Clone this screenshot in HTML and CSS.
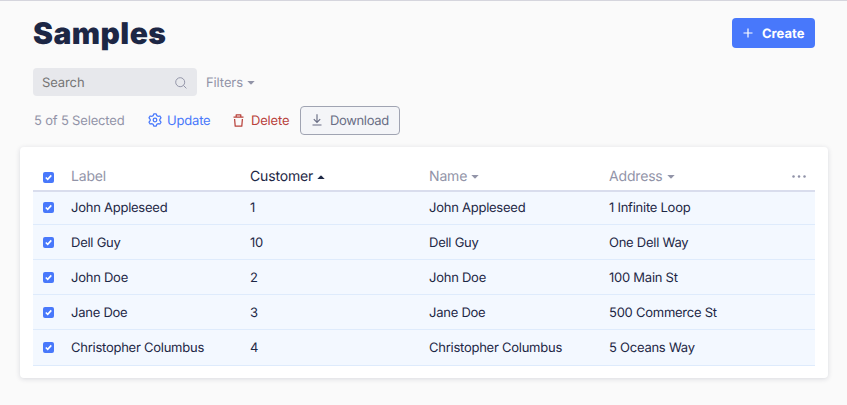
FILE: index.html
```html
<!DOCTYPE html>
<html lang="en">
<head>
<meta charset="utf-8">
<title>Samples</title>
<link rel="stylesheet" href="styles.css">
</head>
<body>
<svg class="defs" width="0" height="0">
  <symbol id="check" viewBox="0 0 11 11"><rect width="11" height="11" rx="2" fill="#4878fb"/><path d="M2.8 5.5l1.9 1.9 3.6-4" fill="none" stroke="#fff" stroke-width="1.6"/></symbol>
  <symbol id="caret" viewBox="0 0 8 4"><path d="M.3 0h7.4L4.5 3.3q-.5.5-1 0z" fill="currentColor"/></symbol>
</svg>
<main class="page">
  <header class="header">
    <h1 class="title">Samples</h1>
    <button class="create"><svg width="10" height="10" viewBox="0 0 10 10"><path d="M5 .5v9M.5 5h9" stroke="#fff" stroke-width="1.2"/></svg><span>Create</span></button>
  </header>
  <div class="filters">
    <div class="search"><span>Search</span><svg width="12" height="12" viewBox="0 0 12 12" fill="none" stroke="#9496a9"><circle cx="5.2" cy="5.2" r="4.5"/><path d="M8.4 8.4l3 3"/></svg></div>
    <span class="filter-label">Filters</span><svg class="caret" width="8" height="4"><use href="#caret"/></svg>
  </div>
  <div class="actions">
    <span class="count">5 of 5 Selected</span>
    <span class="action update"><svg width="14" height="14" viewBox="0 0 14 14" fill="none" stroke="currentColor" stroke-width="1.25" stroke-linejoin="round"><path d="M5.2 2.6L5.9.8h2.2l.7 1.8 1.2.7 1.9-.3 1.1 1.9-1.2 1.4v1.4L13 9.1 11.9 11l-1.9-.3-1.2.7-.7 1.8H5.9l-.7-1.8-1.2-.7-1.9.3L1 9.1l1.2-1.4V6.3L1 4.9 2.1 3l1.9.3z"/><circle cx="7" cy="7" r="1.8"/></svg><span>Update</span></span>
    <span class="action delete"><svg width="11" height="13" viewBox="0 0 11 13" fill="none" stroke="currentColor" stroke-width="1.25" stroke-linejoin="round"><path d="M.5 3.1h10M3.2 3V.8h4.6V3M1.6 5l.6 7.2h6.6L9.4 5"/></svg><span>Delete</span></span>
    <button class="download"><svg width="10" height="12" viewBox="0 0 10 12" fill="none" stroke="currentColor" stroke-width="1.15"><path d="M5 .3v8M1.8 5.2L5 8.4l3.2-3.2M.5 11h9"/></svg><span>Download</span></button>
  </div>
  <section class="card">
    <div class="row head">
      <svg class="check" width="11" height="11"><use href="#check"/></svg>
      <span>Label</span>
      <span class="sorted">Customer<svg class="caret up" width="8" height="4"><use href="#caret"/></svg></span>
      <span>Name<svg class="caret" width="8" height="4"><use href="#caret"/></svg></span>
      <span>Address<svg class="caret" width="8" height="4"><use href="#caret"/></svg></span>
      <svg class="more" width="14" height="3" viewBox="0 0 14 3" fill="#8f91a7"><circle cx="1.5" cy="1.5" r="1.25"/><circle cx="7" cy="1.5" r="1.25"/><circle cx="12.5" cy="1.5" r="1.25"/></svg>
    </div>
    <div class="row"><svg class="check" width="11" height="11"><use href="#check"/></svg><span>John Appleseed</span><span>1</span><span>John Appleseed</span><span>1 Infinite Loop</span></div>
    <div class="row"><svg class="check" width="11" height="11"><use href="#check"/></svg><span>Dell Guy</span><span>10</span><span>Dell Guy</span><span>One Dell Way</span></div>
    <div class="row"><svg class="check" width="11" height="11"><use href="#check"/></svg><span>John Doe</span><span>2</span><span>John Doe</span><span>100 Main St</span></div>
    <div class="row"><svg class="check" width="11" height="11"><use href="#check"/></svg><span>Jane Doe</span><span>3</span><span>Jane Doe</span><span>500 Commerce St</span></div>
    <div class="row"><svg class="check" width="11" height="11"><use href="#check"/></svg><span>Christopher Columbus</span><span>4</span><span>Christopher Columbus</span><span>5 Oceans Way</span></div>
  </section>
</main>
</body>
</html>
```
FILE: styles.css
```css
* { box-sizing: border-box; }
body {
  margin: 0;
  background: #fafafa;
  color: #1d2745;
  font-family: Inter, sans-serif;
  font-size: 13px;
  letter-spacing: -.25px;
  text-rendering: geometricPrecision;
}
svg { display: block; flex: none; }
.defs { height: 0; }
button { font: inherit; letter-spacing: inherit; text-rendering: inherit; }
.page {
  height: 405px;
  padding: 0 19px 0 20px;
  border-top: 1px solid #d5d5dd;
  overflow: hidden;
}
.header {
  display: flex;
  justify-content: space-between;
  padding: 13px 13px 0;
}
.title {
  margin: 0;
  font-size: 30px;
  line-height: 40px;
  font-weight: 900;
  letter-spacing: .45px;
}
.create {
  display: flex;
  align-items: center;
  gap: 9px;
  width: 83px;
  height: 30px;
  margin: 4px 0 0;
  padding: 0 0 0 11px;
  border: 0;
  border-radius: 4px;
  background: #4878fb;
  color: #fff;
  font-weight: 700;
  letter-spacing: 0;
}
.create span { padding-top: 2px; }
.filters {
  display: flex;
  align-items: center;
  height: 28px;
  margin: 14px 0 0 13px;
  color: #9294a8;
}
.search {
  display: flex;
  align-items: center;
  justify-content: space-between;
  width: 164px;
  height: 28px;
  margin-right: 9px;
  padding: 1px 10px 0 9px;
  border-radius: 4px;
  background: #e7e8ec;
  color: #757575;
  letter-spacing: -.1px;
}
.filter-label { padding-top: 2px; letter-spacing: -.1px; }
.caret { margin: 1px 0 0 4px; }
.actions {
  display: flex;
  align-items: center;
  height: 29px;
  margin: 10px 0 0 14px;
  letter-spacing: -.18px;
}
.count { width: 114px; color: #9294a8; }
.action { display: flex; align-items: center; }
.update { width: 85px; gap: 5px; color: #4878fb; }
.delete { width: 67px; gap: 7px; color: #b8413a; }
.count, .action span, .download span { padding-top: 1px; }
.action svg, .download svg { margin-top: -1px; }
.download {
  display: flex;
  align-items: center;
  gap: 8px;
  width: 100px;
  height: 29px;
  padding: 0 0 0 11px;
  border: 1px solid #a0a4b2;
  border-radius: 4px;
  background: #f4f5f8;
  color: #696d84;
  letter-spacing: -.35px;
}
.card {
  height: 231px;
  margin-top: 12px;
  padding: 13px 13px 0;
  border-radius: 4px;
  background: #fff;
  box-shadow: 0 1px 5px rgba(30, 35, 65, .15);
}
.row {
  display: grid;
  grid-template-columns: 38px 179px 179px 180px 1fr;
  align-items: center;
  height: 35px;
  border-bottom: 1px solid #deebfc;
  background: #f3f8ff;
}
.row:nth-child(n+3) span { padding-top: 2px; }
.row:nth-child(2) { height: 33px; }
.row:nth-child(2) .check { margin-top: -1px; }
.row:last-child { height: 36px; padding-bottom: 1px; }
.check { margin-left: 10px; }
.head {
  grid-template-columns: 38px 179px 179px 180px 1fr 23px;
  height: 32px;
  padding-top: 2px;
  border-bottom: 2px solid #d9dded;
  background: #fff;
  color: #9294a8;
  font-size: 14px;
  letter-spacing: -.17px;
}
.head .check { margin-top: 2px; }
.head .more { margin-top: 1px; }
.head span { display: flex; align-items: center; }
.head .sorted { color: #1d2745; }
.up { transform: rotate(180deg); }
```
